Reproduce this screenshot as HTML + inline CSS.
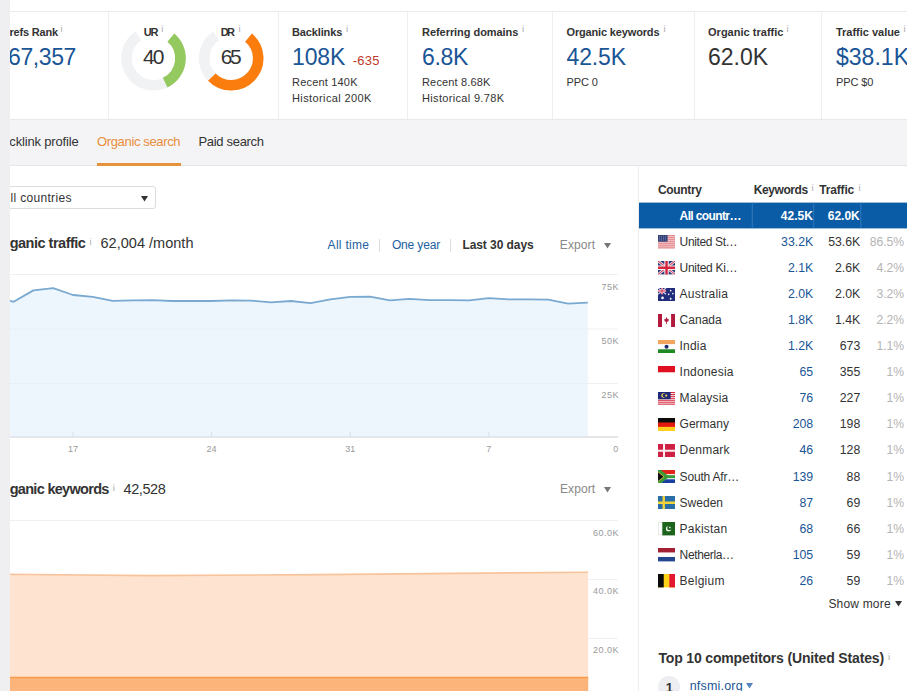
<!DOCTYPE html>
<html lang="en"><head><meta charset="utf-8"><title>Overview</title>
<style>
html,body{margin:0;padding:0}
body{width:907px;height:691px;overflow:hidden;position:relative;background:#fff;font-family:"Liberation Sans", Arial, sans-serif;}
.abs,.flag{position:absolute;display:block}
.strip{position:absolute;left:0;top:0;width:10px;height:691px;background:#efeff1;z-index:5}
.cards{position:absolute;left:0;top:11px;width:907px;height:107px;border-top:1px solid #ebebee;background:#fff}
.cards .abs{top:-12px !important}
.vd{position:absolute;top:0;width:1px;height:108px;background:#eeeef1}
.tabs{position:absolute;left:0;top:119px;width:907px;height:47px;background:#f4f4f6;border-top:1px solid #e9e9ec;border-bottom:1px solid #e6e6e9;box-sizing:border-box}
.ul{position:absolute;left:97px;top:43px;width:84px;height:3px;background:#e5933a}
.main{position:absolute;left:0;top:0;width:637px;height:691px}
.select{position:absolute;left:-10px;top:186px;width:165.5px;height:23px;border:1px solid #dcdce0;border-radius:3px;box-sizing:border-box;background:#fff}
.sep{position:absolute;width:1px;height:13px;background:#ddd}
.side{position:absolute;left:0;top:0;width:907px;height:691px}
.side:before{content:"";position:absolute;left:637.5px;top:166px;width:1px;height:525px;background:#ededf0}
.selrow{position:absolute;left:639px;top:203px;width:268px;height:25.6px;background:#0c5ca6}
.selrow i{position:absolute;top:0;width:1px;height:100%;background:#3577b7}
.hl{position:absolute;left:639px;top:639.5px;width:268px;height:1px;background:#f9f9fa}
.circ{position:absolute;left:658.2px;top:676.3px;width:22px;height:22px;border-radius:50%;background:#eceef2}
.t{position:absolute;white-space:nowrap;line-height:1;z-index:3}
</style></head>
<body>
<div class="strip"></div>
<div class="cards">
  <i class="vd" style="left:108px"></i><i class="vd" style="left:277.5px"></i><i class="vd" style="left:407px"></i><i class="vd" style="left:551.5px"></i><i class="vd" style="left:694px"></i><i class="vd" style="left:821px"></i>
  <svg class="abs" style="left:0;top:0" width="907" height="120"><path d="M170.86 37.62A27 27 0 1 1 138.40 35.92" fill="none" stroke="#f1f2f4" stroke-width="10.6"/><path d="M170.86 37.62A27 27 0 0 1 165.17 82.65" fill="none" stroke="#93c95e" stroke-width="10.6"/><path d="M248.56 37.62A27 27 0 1 1 216.10 35.92" fill="none" stroke="#f1f2f4" stroke-width="10.6"/><path d="M248.56 37.62A27 27 0 1 1 211.81 77.09" fill="none" stroke="#fb7d0e" stroke-width="10.6"/></svg>
</div>
<div class="tabs"><i class="ul"></i></div>
<div class="main">
  <div class="select"></div><svg class="abs" style="left:140.8px;top:196.2px" width="7" height="6" viewBox="0 0 7 6"><path d="M0 0H7L3.5 5.6Z" fill="#333"/></svg>
  <i class="sep" style="left:379px;top:239px"></i><i class="sep" style="left:450px;top:239px"></i>
  <svg class="abs" style="left:604.2px;top:243px" width="7" height="6" viewBox="0 0 7 6"><path d="M0 0H7L3.5 5.6Z" fill="#777"/></svg>
  <svg class="abs" style="left:604px;top:487px" width="7" height="6" viewBox="0 0 7 6"><path d="M0 0H7L3.5 5.6Z" fill="#777"/></svg>
  <svg class="abs" style="left:0;top:266px" width="630" height="425" viewBox="0 266 630 425">
    <g stroke="#f0f0f3" stroke-width="1">
      <path d="M10 274.5H618M10 329H618M10 383.5H618"/>
      <path d="M10 520.5H618M10 579.5H618M10 638.5H618"/>
    </g>
    <path d="M10 437H618" stroke="#dcdce0" stroke-width="1.4"/>
    <path d="M73 432V437M211.6 432V437M350.2 432V437M488.8 432V437" stroke="#d0d0d4" stroke-width="1"/>
    <path d="M-6.2 296.0L13.6 301.8L33.4 290.4L53.2 288.2L73.0 295.0L92.8 296.9L112.6 300.8L132.4 300.3L152.2 300.1L172.0 301.0L191.8 301.0L211.6 301.0L231.4 300.3L251.2 300.6L271.0 302.3L290.8 301.0L310.6 303.2L330.4 299.3L350.2 296.9L370.0 296.7L389.8 300.3L409.6 298.9L429.4 300.1L449.2 300.1L469.0 300.3L488.8 298.1L508.6 299.3L528.4 299.3L548.2 299.6L568.0 303.7L587.8 302.7L587.8 437L-6.2 437Z" fill="#ddeefb" fill-opacity=".5"/>
    <path d="M-6.2 296.0L13.6 301.8L33.4 290.4L53.2 288.2L73.0 295.0L92.8 296.9L112.6 300.8L132.4 300.3L152.2 300.1L172.0 301.0L191.8 301.0L211.6 301.0L231.4 300.3L251.2 300.6L271.0 302.3L290.8 301.0L310.6 303.2L330.4 299.3L350.2 296.9L370.0 296.7L389.8 300.3L409.6 298.9L429.4 300.1L449.2 300.1L469.0 300.3L488.8 298.1L508.6 299.3L528.4 299.3L548.2 299.6L568.0 303.7L587.8 302.7" fill="none" stroke="#79a9d1" stroke-width="1.8" stroke-linejoin="round"/>
    <path d="M0 574.2L150 575.6L320 574.6L588.2 572.2V691H0Z" fill="#fee4d0"/>
    <path d="M0 574.2L150 575.6L320 574.6L588.2 572.2" fill="none" stroke="#f8c39b" stroke-width="1.6"/>
    <path d="M0 677.5H588.2V691H0Z" fill="#fcb47a"/>
    <path d="M0 677.5H588.2" stroke="#f79a4c" stroke-width="1.5"/>
  </svg>
</div>
<div class="side">
  <svg class="abs" style="left:630px;top:195px" width="277" height="40" viewBox="630 195 277 40"><rect x="639" y="202.6" width="268" height="25.8" fill="#0b5ca6"/><path d="M752.3 202.6V228.4M813.7 202.6V228.4M860.8 202.6V228.4" stroke="#3f82c0" stroke-width="1" stroke-opacity=".75"/></svg>
  <svg class="abs" style="left:894.5px;top:601px" width="7" height="6" viewBox="0 0 7 6"><path d="M0 0H7L3.5 5.6Z" fill="#333"/></svg>
  <div class="circ"></div>
  <svg class="abs" style="left:746px;top:683px" width="7" height="6" viewBox="0 0 7 6"><path d="M0 0H7L3.5 5.6Z" fill="#5784bc"/></svg>
</div>
<svg class="flag" style="left:658px;top:235.3px" width="17.1" height="13.4" viewBox="0 0 17 13" preserveAspectRatio="none"><rect width="17" height="13" fill="#f3c6c8"/><rect y="0" width="17" height="1" fill="#e2868c"/><rect y="2" width="17" height="1" fill="#e2868c"/><rect y="4" width="17" height="1" fill="#e2868c"/><rect y="6" width="17" height="1" fill="#e2868c"/><rect y="8" width="17" height="1" fill="#e2868c"/><rect y="10" width="17" height="1" fill="#e2868c"/><rect y="12" width="17" height="1" fill="#e2868c"/><rect width="9.5" height="6.5" fill="#34427a"/><path d="M1 1.6H8.5M1 3.2H8.5M1 4.8H8.5" stroke="#7f8ab2" stroke-width=".8" stroke-dasharray="1 1"/></svg><svg class="flag" style="left:658px;top:261.4px" width="17.1" height="13.4" viewBox="0 0 17 13" preserveAspectRatio="none"><rect width="17" height="13" fill="#2b3a7a"/><path d="M0 0L17 13M17 0L0 13" stroke="#e9e6ef" stroke-width="2.6"/><path d="M0 0L17 13M17 0L0 13" stroke="#d8475a" stroke-width="1"/><path d="M8.5 0V13M0 6.5H17" stroke="#f3eef2" stroke-width="4.4"/><path d="M8.5 0V13M0 6.5H17" stroke="#d6263e" stroke-width="2.4"/></svg><svg class="flag" style="left:658px;top:287.5px" width="17.1" height="13.4" viewBox="0 0 17 13" preserveAspectRatio="none"><rect width="17" height="13" fill="#1f2d7c"/><path d="M0 0L8 6M8 0L0 6" stroke="#d9d4e6" stroke-width="1.2"/><path d="M4 0V6M0 3H8" stroke="#efe6ee" stroke-width="2"/><path d="M4 0V6M0 3H8" stroke="#d8304a" stroke-width="1"/><circle cx="4.5" cy="9.6" r="1.3" fill="#fff"/><circle cx="12.6" cy="2.6" r=".8" fill="#fff"/><circle cx="14.8" cy="5.4" r=".8" fill="#fff"/><circle cx="12.6" cy="10.4" r=".9" fill="#fff"/><circle cx="10.6" cy="6.2" r=".8" fill="#fff"/></svg><svg class="flag" style="left:658px;top:313.5px" width="17.1" height="13.4" viewBox="0 0 17 13" preserveAspectRatio="none"><rect width="17" height="13" fill="#fff"/><rect width="4" height="13" fill="#b3193d"/><rect x="13" width="4" height="13" fill="#b3193d"/><path d="M8.5 3L9.6 5.2L11 5L10.2 7.4L8.9 7.6V9.6H8.1V7.6L6.8 7.4L6 5L7.4 5.2Z" fill="#b3193d"/></svg><svg class="flag" style="left:658px;top:339.6px" width="17.1" height="13.4" viewBox="0 0 17 13" preserveAspectRatio="none"><rect width="17" height="13" fill="#fff"/><rect width="17" height="4" fill="#f3a65f"/><rect y="9" width="17" height="4" fill="#1f8a24"/><circle cx="8.5" cy="6.5" r="2" fill="#1d2a6e"/></svg><svg class="flag" style="left:658px;top:365.7px" width="17.1" height="13.4" viewBox="0 0 17 13" preserveAspectRatio="none"><rect width="17" height="13" fill="#fff"/><rect width="17" height="6.1" fill="#e01022"/></svg><svg class="flag" style="left:658px;top:391.8px" width="17.1" height="13.4" viewBox="0 0 17 13" preserveAspectRatio="none"><rect width="17" height="13" fill="#fbe9ea"/><rect y="0" width="17" height="1" fill="#d6283e"/><rect y="2" width="17" height="1" fill="#d6283e"/><rect y="4" width="17" height="1" fill="#d6283e"/><rect y="6" width="17" height="1" fill="#d6283e"/><rect y="8" width="17" height="1" fill="#d6283e"/><rect y="10" width="17" height="1" fill="#d6283e"/><rect y="12" width="17" height="1" fill="#d6283e"/><rect width="12.5" height="7" fill="#1e2a78"/><circle cx="5.4" cy="3.5" r="2.2" fill="#f1d04a"/><circle cx="6.3" cy="3.5" r="1.7" fill="#1e2a78"/><circle cx="8.2" cy="3.5" r="1.1" fill="#f1d04a"/></svg><svg class="flag" style="left:658px;top:417.9px" width="17.1" height="13.4" viewBox="0 0 17 13" preserveAspectRatio="none"><rect width="17" height="13" fill="#ffce1f"/><rect width="17" height="8.6" fill="#e3190f"/><rect width="17" height="4.3" fill="#0b0b0b"/></svg><svg class="flag" style="left:658px;top:443.9px" width="17.1" height="13.4" viewBox="0 0 17 13" preserveAspectRatio="none"><rect width="17" height="13" fill="#cd2042"/><path d="M6 0V13M0 6.5H17" stroke="#fbeef0" stroke-width="2"/></svg><svg class="flag" style="left:658px;top:470.0px" width="17.1" height="13.4" viewBox="0 0 17 13" preserveAspectRatio="none"><rect width="17" height="13" fill="#fff"/><rect width="17" height="4" fill="#e2231a"/><rect y="9" width="17" height="4" fill="#1a3fa0"/><path d="M0 0L8.5 6.5L0 13" fill="none" stroke="#3a9a3a" stroke-width="3.4"/><path d="M7 6.5H17" stroke="#3a9a3a" stroke-width="3"/><path d="M0 1.8L6 6.5L0 11.2Z" fill="#111"/><path d="M0 1.8L6 6.5L0 11.2" fill="none" stroke="#e9c53a" stroke-width=".8"/></svg><svg class="flag" style="left:658px;top:496.1px" width="17.1" height="13.4" viewBox="0 0 17 13" preserveAspectRatio="none"><rect width="17" height="13" fill="#2a6ea6"/><path d="M5.7 0V13M0 6.5H17" stroke="#f2d33c" stroke-width="2.4"/></svg><svg class="flag" style="left:658px;top:522.2px" width="17.1" height="13.4" viewBox="0 0 17 13" preserveAspectRatio="none"><rect width="17" height="13" fill="#fff"/><rect x="4" width="13" height="13" fill="#1c641c"/><circle cx="10.5" cy="6.5" r="2.6" fill="#fff"/><circle cx="11.3" cy="5.8" r="2.2" fill="#1c641c"/><circle cx="11.8" cy="5.4" r=".8" fill="#fff"/><rect x=".5" y=".5" width="3.5" height="12" fill="#fff" stroke="#ddd" stroke-width=".6"/></svg><svg class="flag" style="left:658px;top:548.3px" width="17.1" height="13.4" viewBox="0 0 17 13" preserveAspectRatio="none"><rect width="17" height="13" fill="#fff"/><rect width="17" height="4.3" fill="#a31f34"/><rect y="8.7" width="17" height="4.3" fill="#23468e"/></svg><svg class="flag" style="left:658px;top:574.3px" width="17.1" height="13.4" viewBox="0 0 17 13" preserveAspectRatio="none"><rect width="17" height="13" fill="#fcd116"/><rect width="5.7" height="13" fill="#0a0a0a"/><rect x="11.3" width="5.7" height="13" fill="#e3172d"/></svg>

<span class="t" style="left:-5.27px;top:27.00px;font-size:11px;color:#333;font-weight:700;">Ah</span>
<span class="t" style="left:9.50px;top:27.00px;font-size:11px;color:#333;font-weight:700;letter-spacing:-0.193px;">refs Rank</span>
<span class="t" style="left:60.60px;top:24.20px;font-size:9.5px;color:#aaa;">i</span>
<span class="t" style="left:-23.88px;top:46.00px;font-size:23px;color:#1a5596;">2,5</span>
<span class="t" style="left:8.10px;top:46.00px;font-size:23px;color:#1a5596;letter-spacing:-0.432px;">67,357</span>
<span class="t" style="left:143.70px;top:27.00px;font-size:11px;color:#333;font-weight:700;letter-spacing:-1.191px;">UR</span>
<span class="t" style="left:161.20px;top:24.20px;font-size:9.5px;color:#aaa;">i</span>
<span class="t" style="left:143.00px;top:46.00px;font-size:21px;color:#333;letter-spacing:-1.959px;">40</span>
<span class="t" style="left:220.80px;top:27.00px;font-size:11px;color:#333;font-weight:700;letter-spacing:-1.691px;">DR</span>
<span class="t" style="left:238.60px;top:24.20px;font-size:9.5px;color:#aaa;">i</span>
<span class="t" style="left:220.80px;top:46.00px;font-size:21px;color:#333;letter-spacing:-2.559px;">65</span>
<span class="t" style="left:292.00px;top:27.00px;font-size:11px;color:#333;font-weight:700;letter-spacing:-0.134px;">Backlinks</span>
<span class="t" style="left:346.00px;top:24.20px;font-size:9.5px;color:#aaa;">i</span>
<span class="t" style="left:292.00px;top:46.30px;font-size:23px;color:#1a5596;letter-spacing:-0.106px;">108K</span>
<span class="t" style="left:352.70px;top:54.30px;font-size:13px;color:#c0392b;letter-spacing:0.290px;">-635</span>
<span class="t" style="left:292.00px;top:77.40px;font-size:11px;color:#333;letter-spacing:0.189px;">Recent 140K</span>
<span class="t" style="left:292.00px;top:93.20px;font-size:11px;color:#333;letter-spacing:0.387px;">Historical 200K</span>
<span class="t" style="left:422.00px;top:27.00px;font-size:11px;color:#333;font-weight:700;letter-spacing:-0.049px;">Referring domains</span>
<span class="t" style="left:522.00px;top:24.20px;font-size:9.5px;color:#aaa;">i</span>
<span class="t" style="left:422.00px;top:46.30px;font-size:23px;color:#1a5596;letter-spacing:-0.309px;">6.8K</span>
<span class="t" style="left:422.00px;top:77.40px;font-size:11px;color:#333;letter-spacing:0.159px;">Recent 8.68K</span>
<span class="t" style="left:422.00px;top:93.20px;font-size:11px;color:#333;letter-spacing:0.330px;">Historical 9.78K</span>
<span class="t" style="left:566.50px;top:27.00px;font-size:11px;color:#333;font-weight:700;letter-spacing:-0.158px;">Organic keywords</span>
<span class="t" style="left:663.60px;top:24.20px;font-size:9.5px;color:#aaa;">i</span>
<span class="t" style="left:566.50px;top:46.30px;font-size:23px;color:#1a5596;letter-spacing:-0.152px;">42.5K</span>
<span class="t" style="left:566.50px;top:77.40px;font-size:11px;color:#333;letter-spacing:-0.124px;">PPC 0</span>
<span class="t" style="left:708.00px;top:27.00px;font-size:11px;color:#333;font-weight:700;letter-spacing:0.022px;">Organic traffic</span>
<span class="t" style="left:786.40px;top:24.20px;font-size:9.5px;color:#aaa;">i</span>
<span class="t" style="left:708.00px;top:46.30px;font-size:23px;color:#333;letter-spacing:-0.027px;">62.0K</span>
<span class="t" style="left:836.00px;top:27.00px;font-size:11px;color:#333;font-weight:700;letter-spacing:-0.017px;">Traffic value</span>
<span class="t" style="left:903.40px;top:24.20px;font-size:9.5px;color:#aaa;">i</span>
<span class="t" style="left:836.00px;top:46.30px;font-size:23px;color:#1a5596;letter-spacing:0.019px;">$38.1K</span>
<span class="t" style="left:836.00px;top:77.40px;font-size:11px;color:#333;letter-spacing:-0.124px;">PPC $0</span>
<span class="t" style="left:-6.61px;top:134.70px;font-size:13px;color:#333;">Ba</span>
<span class="t" style="left:9.30px;top:134.70px;font-size:13px;color:#333;letter-spacing:-0.164px;">cklink profile</span>
<span class="t" style="left:97.00px;top:134.70px;font-size:13px;color:#ea8d3a;letter-spacing:-0.350px;">Organic search</span>
<span class="t" style="left:198.50px;top:134.70px;font-size:13px;color:#333;letter-spacing:-0.316px;">Paid search</span>
<span class="t" style="left:1.38px;top:192.30px;font-size:12px;color:#333;">A</span>
<span class="t" style="left:10.60px;top:192.30px;font-size:12px;color:#333;letter-spacing:0.313px;">ll countries</span>
<span class="t" style="left:-7.52px;top:236.00px;font-size:14.5px;color:#333;font-weight:700;">Or</span>
<span class="t" style="left:9.70px;top:236.00px;font-size:14.5px;color:#333;font-weight:700;letter-spacing:-0.499px;">ganic traffic</span>
<span class="t" style="left:89.50px;top:237.00px;font-size:9.5px;color:#aaa;">i</span>
<span class="t" style="left:100.50px;top:236.00px;font-size:14.5px;color:#333;letter-spacing:0.023px;">62,004 /month</span>
<span class="t" style="left:327.60px;top:239.00px;font-size:12px;color:#21609f;letter-spacing:0.294px;">All time</span>
<span class="t" style="left:391.90px;top:239.00px;font-size:12px;color:#21609f;letter-spacing:-0.151px;">One year</span>
<span class="t" style="left:462.40px;top:239.00px;font-size:12px;color:#333;font-weight:700;letter-spacing:-0.068px;">Last 30 days</span>
<span class="t" style="left:559.80px;top:239.00px;font-size:12px;color:#888;letter-spacing:0.103px;">Export</span>
<span class="t" style="left:-7.52px;top:482.30px;font-size:14.5px;color:#333;font-weight:700;">Or</span>
<span class="t" style="left:9.70px;top:482.30px;font-size:14.5px;color:#333;font-weight:700;letter-spacing:-0.700px;">ganic keywords</span>
<span class="t" style="left:112.80px;top:483.00px;font-size:9.5px;color:#aaa;">i</span>
<span class="t" style="left:123.50px;top:482.30px;font-size:14.5px;color:#333;letter-spacing:-0.412px;">42,528</span>
<span class="t" style="left:560.00px;top:483.20px;font-size:12px;color:#888;letter-spacing:0.103px;">Export</span>
<span class="t" style="left:601.50px;top:283.20px;font-size:9px;color:#999;letter-spacing:0.492px;">75K</span>
<span class="t" style="left:601.50px;top:337.30px;font-size:9px;color:#999;letter-spacing:0.492px;">50K</span>
<span class="t" style="left:601.50px;top:391.00px;font-size:9px;color:#999;letter-spacing:0.492px;">25K</span>
<span class="t" style="left:613.28px;top:445.20px;font-size:9px;color:#999;">0</span>
<span class="t" style="left:67.99px;top:445.20px;font-size:9px;color:#999;">17</span>
<span class="t" style="left:206.59px;top:445.20px;font-size:9px;color:#999;">24</span>
<span class="t" style="left:345.19px;top:445.20px;font-size:9px;color:#999;">31</span>
<span class="t" style="left:486.29px;top:445.20px;font-size:9px;color:#999;">7</span>
<span class="t" style="left:593.10px;top:529.00px;font-size:9px;color:#999;letter-spacing:0.442px;">60.0K</span>
<span class="t" style="left:593.10px;top:587.30px;font-size:9px;color:#999;letter-spacing:0.442px;">40.0K</span>
<span class="t" style="left:593.10px;top:646.20px;font-size:9px;color:#999;letter-spacing:0.442px;">20.0K</span>
<span class="t" style="left:658.00px;top:184.40px;font-size:12px;color:#333;font-weight:700;letter-spacing:-0.333px;">Country</span>
<span class="t" style="left:753.70px;top:184.40px;font-size:12px;color:#333;font-weight:700;letter-spacing:-0.408px;">Keywords</span>
<span class="t" style="left:811.50px;top:182.50px;font-size:9.5px;color:#aaa;">i</span>
<span class="t" style="left:819.20px;top:184.40px;font-size:12px;color:#333;font-weight:700;letter-spacing:-0.153px;">Traffic</span>
<span class="t" style="left:858.40px;top:182.50px;font-size:9.5px;color:#aaa;">i</span>
<span class="t" style="left:679.60px;top:209.70px;font-size:12px;color:#fff;font-weight:700;letter-spacing:-0.620px;">All countr…</span>
<span class="t" style="left:780.87px;top:209.70px;font-size:12px;color:#fff;font-weight:700;">42.5K</span>
<span class="t" style="left:827.77px;top:209.70px;font-size:12px;color:#fff;font-weight:700;">62.0K</span>
<span class="t" style="left:679.60px;top:235.78px;font-size:12px;color:#333;letter-spacing:-0.373px;">United St…</span>
<span class="t" style="left:781.06px;top:235.78px;font-size:12.3px;color:#1a5596;">33.2K</span>
<span class="t" style="left:828.16px;top:235.78px;font-size:12.3px;color:#333;">53.6K</span>
<span class="t" style="left:869.64px;top:235.78px;font-size:12.2px;color:#b4b4b4;">86.5%</span>
<span class="t" style="left:679.60px;top:261.86px;font-size:12px;color:#333;letter-spacing:-0.300px;">United Ki…</span>
<span class="t" style="left:787.90px;top:261.86px;font-size:12.3px;color:#1a5596;">2.1K</span>
<span class="t" style="left:835.00px;top:261.86px;font-size:12.3px;color:#333;">2.6K</span>
<span class="t" style="left:876.42px;top:261.86px;font-size:12.2px;color:#b4b4b4;">4.2%</span>
<span class="t" style="left:679.60px;top:287.94px;font-size:12px;color:#333;letter-spacing:0.202px;">Australia</span>
<span class="t" style="left:787.90px;top:287.94px;font-size:12.3px;color:#1a5596;">2.0K</span>
<span class="t" style="left:835.00px;top:287.94px;font-size:12.3px;color:#333;">2.0K</span>
<span class="t" style="left:876.42px;top:287.94px;font-size:12.2px;color:#b4b4b4;">3.2%</span>
<span class="t" style="left:679.60px;top:314.02px;font-size:12px;color:#333;letter-spacing:0.011px;">Canada</span>
<span class="t" style="left:787.90px;top:314.02px;font-size:12.3px;color:#1a5596;">1.8K</span>
<span class="t" style="left:835.00px;top:314.02px;font-size:12.3px;color:#333;">1.4K</span>
<span class="t" style="left:876.42px;top:314.02px;font-size:12.2px;color:#b4b4b4;">2.2%</span>
<span class="t" style="left:679.60px;top:340.10px;font-size:12px;color:#333;letter-spacing:0.192px;">India</span>
<span class="t" style="left:787.90px;top:340.10px;font-size:12.3px;color:#1a5596;">1.2K</span>
<span class="t" style="left:839.77px;top:340.10px;font-size:12.3px;color:#333;">673</span>
<span class="t" style="left:876.42px;top:340.10px;font-size:12.2px;color:#b4b4b4;">1.1%</span>
<span class="t" style="left:679.60px;top:366.18px;font-size:12px;color:#333;letter-spacing:0.232px;">Indonesia</span>
<span class="t" style="left:799.51px;top:366.18px;font-size:12.3px;color:#1a5596;">65</span>
<span class="t" style="left:839.77px;top:366.18px;font-size:12.3px;color:#333;">355</span>
<span class="t" style="left:886.58px;top:366.18px;font-size:12.2px;color:#b4b4b4;">1%</span>
<span class="t" style="left:679.60px;top:392.26px;font-size:12px;color:#333;letter-spacing:0.177px;">Malaysia</span>
<span class="t" style="left:799.51px;top:392.26px;font-size:12.3px;color:#1a5596;">76</span>
<span class="t" style="left:839.77px;top:392.26px;font-size:12.3px;color:#333;">227</span>
<span class="t" style="left:886.58px;top:392.26px;font-size:12.2px;color:#b4b4b4;">1%</span>
<span class="t" style="left:679.60px;top:418.34px;font-size:12px;color:#333;letter-spacing:-0.010px;">Germany</span>
<span class="t" style="left:792.67px;top:418.34px;font-size:12.3px;color:#1a5596;">208</span>
<span class="t" style="left:839.77px;top:418.34px;font-size:12.3px;color:#333;">198</span>
<span class="t" style="left:886.58px;top:418.34px;font-size:12.2px;color:#b4b4b4;">1%</span>
<span class="t" style="left:679.60px;top:444.42px;font-size:12px;color:#333;letter-spacing:0.219px;">Denmark</span>
<span class="t" style="left:799.51px;top:444.42px;font-size:12.3px;color:#1a5596;">46</span>
<span class="t" style="left:839.77px;top:444.42px;font-size:12.3px;color:#333;">128</span>
<span class="t" style="left:886.58px;top:444.42px;font-size:12.2px;color:#b4b4b4;">1%</span>
<span class="t" style="left:679.60px;top:470.50px;font-size:12px;color:#333;letter-spacing:-0.186px;">South Afr…</span>
<span class="t" style="left:792.67px;top:470.50px;font-size:12.3px;color:#1a5596;">139</span>
<span class="t" style="left:846.61px;top:470.50px;font-size:12.3px;color:#333;">88</span>
<span class="t" style="left:886.58px;top:470.50px;font-size:12.2px;color:#b4b4b4;">1%</span>
<span class="t" style="left:679.60px;top:496.58px;font-size:12px;color:#333;letter-spacing:0.005px;">Sweden</span>
<span class="t" style="left:799.51px;top:496.58px;font-size:12.3px;color:#1a5596;">87</span>
<span class="t" style="left:846.61px;top:496.58px;font-size:12.3px;color:#333;">69</span>
<span class="t" style="left:886.58px;top:496.58px;font-size:12.2px;color:#b4b4b4;">1%</span>
<span class="t" style="left:679.60px;top:522.66px;font-size:12px;color:#333;letter-spacing:0.224px;">Pakistan</span>
<span class="t" style="left:799.51px;top:522.66px;font-size:12.3px;color:#1a5596;">68</span>
<span class="t" style="left:846.61px;top:522.66px;font-size:12.3px;color:#333;">66</span>
<span class="t" style="left:886.58px;top:522.66px;font-size:12.2px;color:#b4b4b4;">1%</span>
<span class="t" style="left:679.60px;top:548.74px;font-size:12px;color:#333;letter-spacing:-0.357px;">Netherla…</span>
<span class="t" style="left:792.67px;top:548.74px;font-size:12.3px;color:#1a5596;">105</span>
<span class="t" style="left:846.61px;top:548.74px;font-size:12.3px;color:#333;">59</span>
<span class="t" style="left:886.58px;top:548.74px;font-size:12.2px;color:#b4b4b4;">1%</span>
<span class="t" style="left:679.60px;top:574.82px;font-size:12px;color:#333;letter-spacing:0.240px;">Belgium</span>
<span class="t" style="left:799.51px;top:574.82px;font-size:12.3px;color:#1a5596;">26</span>
<span class="t" style="left:846.61px;top:574.82px;font-size:12.3px;color:#333;">59</span>
<span class="t" style="left:886.58px;top:574.82px;font-size:12.2px;color:#b4b4b4;">1%</span>
<span class="t" style="left:828.40px;top:598.00px;font-size:12px;color:#333;letter-spacing:0.187px;">Show more</span>
<span class="t" style="left:658.40px;top:651.00px;font-size:14px;color:#333;font-weight:700;letter-spacing:-0.154px;">Top 10 competitors (United States)</span>
<span class="t" style="left:888.00px;top:651.50px;font-size:9.5px;color:#aaa;">i</span>
<span class="t" style="left:665.78px;top:680.80px;font-size:13px;color:#333;font-weight:700;">1</span>
<span class="t" style="left:689.70px;top:679.60px;font-size:12.5px;color:#1a5596;letter-spacing:0.199px;">nfsmi.org</span>
</body></html>
